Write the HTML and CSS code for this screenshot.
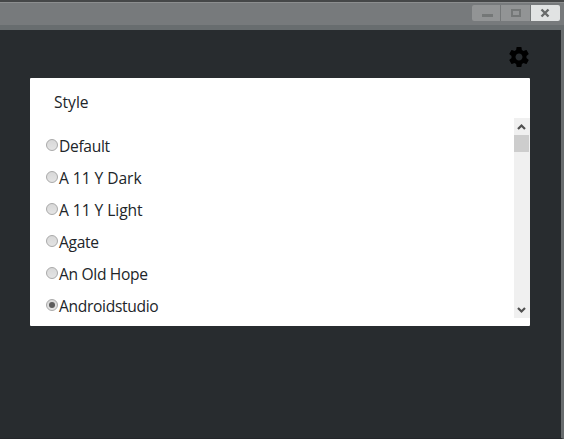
FILE: index.html
```html
<!DOCTYPE html>
<html lang="en">
<head>
<meta charset="utf-8">
<title>Style</title>
<link rel="stylesheet" href="styles.css">
</head>
<body>
<div class="window">
  <header class="titlebar">
    <div class="controls">
      <span class="control"><svg width="28" height="16"><path d="M10 9h11v3H10z" fill="#747777"/></svg></span>
      <span class="control"><svg width="29" height="16"><path d="M11 5h8v6h-8z" fill="none" stroke="#747777" stroke-width="2"/></svg></span>
      <span class="control close"><svg width="29" height="16"><path d="M10.5 4.5l7 7M17.5 4.5l-7 7" stroke="#686a6a" stroke-width="2.4"/></svg></span>
    </div>
  </header>
  <main class="content">
    <div class="toolbar">
      <svg class="gear" width="24" height="24" viewBox="0 0 24 24"><path d="M19.43 12.98c.04-.32.07-.64.07-.98s-.03-.66-.07-.98l2.11-1.65c.19-.15.24-.42.12-.64l-2-3.46c-.12-.22-.39-.3-.61-.22l-2.49 1c-.52-.4-1.08-.73-1.69-.98l-.38-2.65C14.46 2.18 14.25 2 14 2h-4c-.25 0-.46.18-.49.42l-.38 2.65c-.61.25-1.17.59-1.69.98l-2.49-1c-.23-.09-.49 0-.61.22l-2 3.46c-.13.22-.07.49.12.64l2.11 1.65c-.04.32-.07.65-.07.98s.03.66.07.98l-2.11 1.65c-.19.15-.24.42-.12.64l2 3.46c.12.22.39.3.61.22l2.49-1c.52.4 1.08.73 1.69.98l.38 2.65c.03.24.24.42.49.42h4c.25 0 .46-.18.49-.42l.38-2.65c.61-.25 1.17-.59 1.69-.98l2.49 1c.23.09.49 0 .61-.22l2-3.46c.12-.22.07-.49-.12-.64l-2.11-1.65zM12 15.5c-1.93 0-3.5-1.57-3.5-3.5s1.57-3.5 3.5-3.5 3.5 1.57 3.5 3.5-1.57 3.5-3.5 3.5z"/></svg>
    </div>
    <section class="panel">
      <h1 class="title">Style</h1>
      <div class="scroller">
        <ul class="options">
          <li class="option"><span class="radio"></span><span class="label">Default</span></li>
          <li class="option"><span class="radio"></span><span class="label spaced">A 11 Y Dark</span></li>
          <li class="option"><span class="radio"></span><span class="label spaced">A 11 Y Light</span></li>
          <li class="option"><span class="radio"></span><span class="label">Agate</span></li>
          <li class="option"><span class="radio"></span><span class="label">An Old Hope</span></li>
          <li class="option"><span class="radio checked"></span><span class="label">Androidstudio</span></li>
        </ul>
        <div class="scrollbar">
          <svg width="16" height="17"><path d="M4 11L7.5 7.5L11 11" fill="none" stroke="#505050" stroke-width="2.2"/></svg>
          <div class="thumb"></div>
          <svg class="down" width="16" height="17"><path d="M4 7L7.5 10.5L11 7" fill="none" stroke="#505050" stroke-width="2.2"/></svg>
        </div>
      </div>
    </section>
  </main>
</div>
</body>
</html>
```

FILE: styles.css
```css
* { box-sizing: border-box; }

body {
  margin: 0;
  overflow: hidden;
  font: 15.6px/24px "Open Sans", "Noto Sans", sans-serif;
  letter-spacing: -0.33px;
  color: #212529;
}

svg { display: block; }

.window {
  display: flex;
  flex-direction: column;
  width: 564px;
  height: 439px;
}

.titlebar {
  display: flex;
  justify-content: flex-end;
  height: 30px;
  padding: 5px 4px 0 0;
  background: linear-gradient(#454748 2px, #8c8e8f 2px, #8c8e8f 3px, #777a7c 3px, #777a7c 25px, #686d6f 25px);
}

.controls {
  display: flex;
  gap: 1px;
  width: 88px;
  height: 16px;
  border-radius: 2px;
  background: #747778;
  overflow: hidden;
}

.control { background: #929495; }

.close { background: #e1e3e3; }

.content {
  flex: 1;
  padding: 15px 31px 0 30px;
  border-right: 3px solid #686c6e;
  border-bottom: 1px solid #24262a;
  background: #282c2f;
}

.toolbar {
  display: flex;
  justify-content: flex-end;
  height: 33px;
  margin-right: -1px;
}

.panel {
  width: 500px;
  height: 248px;
  padding-top: 12px;
  border-radius: 1px;
  background: #fff;
}

.title {
  margin: 0 0 4px;
  padding-left: 24px;
  font-size: inherit;
  font-weight: 400;
  line-height: 24px;
  letter-spacing: 0;
}

.scroller {
  display: flex;
  justify-content: space-between;
  height: 200px;
}

.options {
  margin: 0;
  padding: 12px 0 0 16px;
  list-style: none;
}

.option {
  display: flex;
  align-items: center;
  height: 32px;
  gap: 1px;
}

.label { white-space: nowrap; }

.spaced { letter-spacing: -0.05px; }

.radio {
  display: flex;
  width: 12px;
  height: 12px;
  margin-bottom: 2px;
  border: 1px solid #a9a9a9;
  border-radius: 50%;
  background: linear-gradient(#d8d8d8, #e4e4e4);
}

.checked::after {
  content: "";
  width: 6px;
  height: 6px;
  margin: 2px;
  border-radius: 50%;
  background: #5c5c5c;
}

.scrollbar {
  display: flex;
  flex-direction: column;
  width: 16px;
  background: #f0f0f0;
}

.thumb {
  width: 15px;
  height: 17px;
  background: #cdcdcd;
}

.down { margin-top: auto; }
```
